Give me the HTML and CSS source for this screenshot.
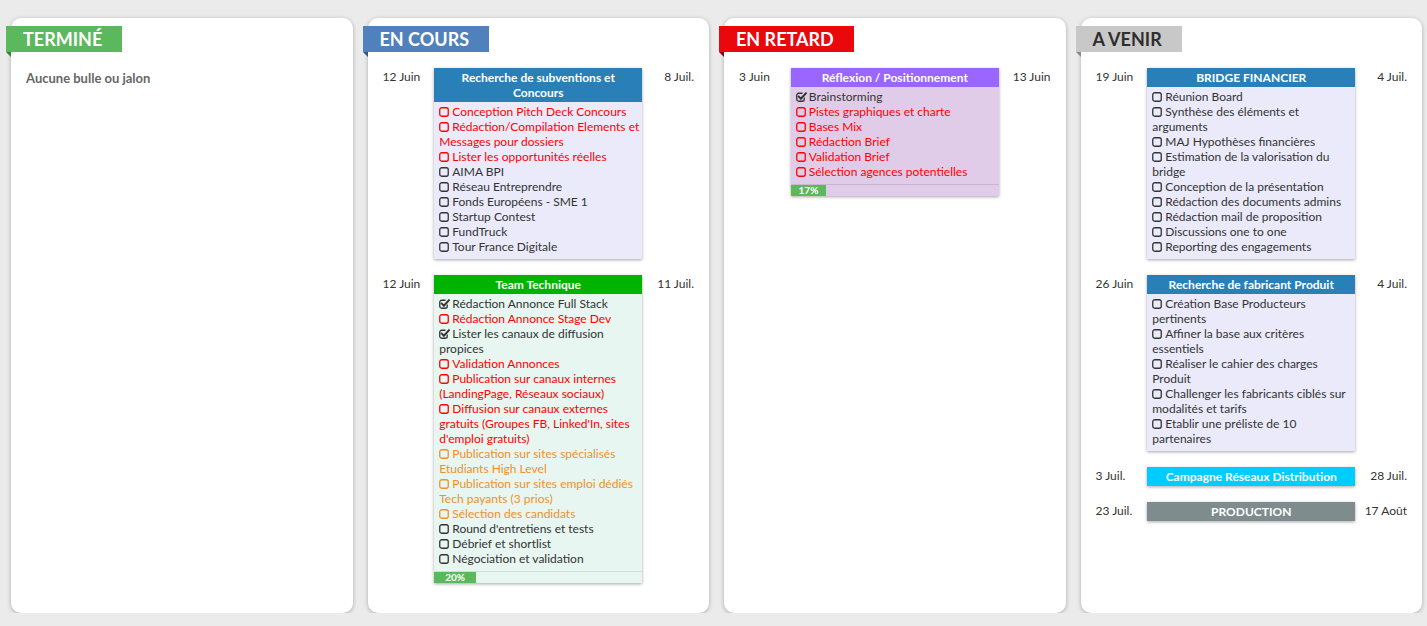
FILE: index.html
```html
<!DOCTYPE html>
<html lang="fr">
<head>
<meta charset="utf-8">
<title>Tableau</title>
<link rel="stylesheet" href="styles.css">
</head>
<body>
<div class="board">

  <section class="col">
    <div class="tab tab-green">TERMINÉ</div>
    <p class="empty">Aucune bulle ou jalon</p>
  </section>

  <section class="col">
    <div class="tab tab-blue">EN COURS</div>
    <div class="rows">
      <div class="row">
        <div class="date">12 Juin</div>
        <div class="card body-lav">
          <div class="card-head head-blue">Recherche de subventions et Concours</div>
          <ul class="items">
            <li class="red"><svg class="cb" viewBox="0 0 10 10"><rect x="0.75" y="0.75" width="8.5" height="8.5" rx="2"/></svg>Conception Pitch Deck Concours</li>
            <li class="red"><svg class="cb" viewBox="0 0 10 10"><rect x="0.75" y="0.75" width="8.5" height="8.5" rx="2"/></svg>Rédaction/Compilation Elements et Messages pour dossiers</li>
            <li class="red"><svg class="cb" viewBox="0 0 10 10"><rect x="0.75" y="0.75" width="8.5" height="8.5" rx="2"/></svg>Lister les opportunités réelles</li>
            <li><svg class="cb" viewBox="0 0 10 10"><rect x="0.75" y="0.75" width="8.5" height="8.5" rx="2"/></svg>AIMA BPI</li>
            <li><svg class="cb" viewBox="0 0 10 10"><rect x="0.75" y="0.75" width="8.5" height="8.5" rx="2"/></svg>Réseau Entreprendre</li>
            <li><svg class="cb" viewBox="0 0 10 10"><rect x="0.75" y="0.75" width="8.5" height="8.5" rx="2"/></svg>Fonds Européens - SME 1</li>
            <li><svg class="cb" viewBox="0 0 10 10"><rect x="0.75" y="0.75" width="8.5" height="8.5" rx="2"/></svg>Startup Contest</li>
            <li><svg class="cb" viewBox="0 0 10 10"><rect x="0.75" y="0.75" width="8.5" height="8.5" rx="2"/></svg>FundTruck</li>
            <li><svg class="cb" viewBox="0 0 10 10"><rect x="0.75" y="0.75" width="8.5" height="8.5" rx="2"/></svg>Tour France Digitale</li>
          </ul>
        </div>
        <div class="date date-end">8 Juil.</div>
      </div>

      <div class="row">
        <div class="date">12 Juin</div>
        <div class="card body-mint">
          <div class="card-head head-green">Team Technique</div>
          <ul class="items">
            <li><svg class="cb cb-on" viewBox="0 0 11 10"><path class="box" d="M8.25 5.5V7.25a2 2 0 0 1-2 2H2.75a2 2 0 0 1-2-2V3.25a2 2 0 0 1 2-2H6.5"/><path class="tick" d="M2.8 4.6L4.9 6.7L9.9 1.3"/></svg>Rédaction Annonce Full Stack</li>
            <li class="red"><svg class="cb" viewBox="0 0 10 10"><rect x="0.75" y="0.75" width="8.5" height="8.5" rx="2"/></svg>Rédaction Annonce Stage Dev</li>
            <li><svg class="cb cb-on" viewBox="0 0 11 10"><path class="box" d="M8.25 5.5V7.25a2 2 0 0 1-2 2H2.75a2 2 0 0 1-2-2V3.25a2 2 0 0 1 2-2H6.5"/><path class="tick" d="M2.8 4.6L4.9 6.7L9.9 1.3"/></svg>Lister les canaux de diffusion propices</li>
            <li class="red"><svg class="cb" viewBox="0 0 10 10"><rect x="0.75" y="0.75" width="8.5" height="8.5" rx="2"/></svg>Validation Annonces</li>
            <li class="red"><svg class="cb" viewBox="0 0 10 10"><rect x="0.75" y="0.75" width="8.5" height="8.5" rx="2"/></svg>Publication sur canaux internes (LandingPage, Réseaux sociaux)</li>
            <li class="red"><svg class="cb" viewBox="0 0 10 10"><rect x="0.75" y="0.75" width="8.5" height="8.5" rx="2"/></svg>Diffusion sur canaux externes gratuits (Groupes FB, Linked'In, sites d'emploi gratuits)</li>
            <li class="orange"><svg class="cb" viewBox="0 0 10 10"><rect x="0.75" y="0.75" width="8.5" height="8.5" rx="2"/></svg>Publication sur sites spécialisés Etudiants High Level</li>
            <li class="orange"><svg class="cb" viewBox="0 0 10 10"><rect x="0.75" y="0.75" width="8.5" height="8.5" rx="2"/></svg>Publication sur sites emploi dédiés Tech payants (3 prios)</li>
            <li class="orange"><svg class="cb" viewBox="0 0 10 10"><rect x="0.75" y="0.75" width="8.5" height="8.5" rx="2"/></svg>Sélection des candidats</li>
            <li><svg class="cb" viewBox="0 0 10 10"><rect x="0.75" y="0.75" width="8.5" height="8.5" rx="2"/></svg>Round d'entretiens et tests</li>
            <li><svg class="cb" viewBox="0 0 10 10"><rect x="0.75" y="0.75" width="8.5" height="8.5" rx="2"/></svg>Débrief et shortlist</li>
            <li><svg class="cb" viewBox="0 0 10 10"><rect x="0.75" y="0.75" width="8.5" height="8.5" rx="2"/></svg>Négociation et validation</li>
          </ul>
          <div class="progress"><div class="bar" style="width:20%">20%</div></div>
        </div>
        <div class="date date-end">11 Juil.</div>
      </div>
    </div>
  </section>

  <section class="col">
    <div class="tab tab-red">EN RETARD</div>
    <div class="rows">
      <div class="row">
        <div class="date">3 Juin</div>
        <div class="card body-lilac">
          <div class="card-head head-purple">Réflexion / Positionnement</div>
          <ul class="items">
            <li><svg class="cb cb-on" viewBox="0 0 11 10"><path class="box" d="M8.25 5.5V7.25a2 2 0 0 1-2 2H2.75a2 2 0 0 1-2-2V3.25a2 2 0 0 1 2-2H6.5"/><path class="tick" d="M2.8 4.6L4.9 6.7L9.9 1.3"/></svg>Brainstorming</li>
            <li class="red"><svg class="cb" viewBox="0 0 10 10"><rect x="0.75" y="0.75" width="8.5" height="8.5" rx="2"/></svg>Pistes graphiques et charte</li>
            <li class="red"><svg class="cb" viewBox="0 0 10 10"><rect x="0.75" y="0.75" width="8.5" height="8.5" rx="2"/></svg>Bases Mix</li>
            <li class="red"><svg class="cb" viewBox="0 0 10 10"><rect x="0.75" y="0.75" width="8.5" height="8.5" rx="2"/></svg>Rédaction Brief</li>
            <li class="red"><svg class="cb" viewBox="0 0 10 10"><rect x="0.75" y="0.75" width="8.5" height="8.5" rx="2"/></svg>Validation Brief</li>
            <li class="red"><svg class="cb" viewBox="0 0 10 10"><rect x="0.75" y="0.75" width="8.5" height="8.5" rx="2"/></svg>Sélection agences potentielles</li>
          </ul>
          <div class="progress"><div class="bar" style="width:17%">17%</div></div>
        </div>
        <div class="date date-end">13 Juin</div>
      </div>
    </div>
  </section>

  <section class="col">
    <div class="tab tab-gray">A VENIR</div>
    <div class="rows">
      <div class="row">
        <div class="date">19 Juin</div>
        <div class="card body-lav">
          <div class="card-head head-blue">BRIDGE FINANCIER</div>
          <ul class="items">
            <li><svg class="cb" viewBox="0 0 10 10"><rect x="0.75" y="0.75" width="8.5" height="8.5" rx="2"/></svg>Réunion Board</li>
            <li><svg class="cb" viewBox="0 0 10 10"><rect x="0.75" y="0.75" width="8.5" height="8.5" rx="2"/></svg>Synthèse des éléments et arguments</li>
            <li><svg class="cb" viewBox="0 0 10 10"><rect x="0.75" y="0.75" width="8.5" height="8.5" rx="2"/></svg>MAJ Hypothèses financières</li>
            <li><svg class="cb" viewBox="0 0 10 10"><rect x="0.75" y="0.75" width="8.5" height="8.5" rx="2"/></svg>Estimation de la valorisation du bridge</li>
            <li><svg class="cb" viewBox="0 0 10 10"><rect x="0.75" y="0.75" width="8.5" height="8.5" rx="2"/></svg>Conception de la présentation</li>
            <li><svg class="cb" viewBox="0 0 10 10"><rect x="0.75" y="0.75" width="8.5" height="8.5" rx="2"/></svg>Rédaction des documents admins</li>
            <li><svg class="cb" viewBox="0 0 10 10"><rect x="0.75" y="0.75" width="8.5" height="8.5" rx="2"/></svg>Rédaction mail de proposition</li>
            <li><svg class="cb" viewBox="0 0 10 10"><rect x="0.75" y="0.75" width="8.5" height="8.5" rx="2"/></svg>Discussions one to one</li>
            <li><svg class="cb" viewBox="0 0 10 10"><rect x="0.75" y="0.75" width="8.5" height="8.5" rx="2"/></svg>Reporting des engagements</li>
          </ul>
        </div>
        <div class="date date-end">4 Juil.</div>
      </div>

      <div class="row">
        <div class="date">26 Juin</div>
        <div class="card body-lav">
          <div class="card-head head-blue">Recherche de fabricant Produit</div>
          <ul class="items">
            <li><svg class="cb" viewBox="0 0 10 10"><rect x="0.75" y="0.75" width="8.5" height="8.5" rx="2"/></svg>Création Base Producteurs pertinents</li>
            <li><svg class="cb" viewBox="0 0 10 10"><rect x="0.75" y="0.75" width="8.5" height="8.5" rx="2"/></svg>Affiner la base aux critères essentiels</li>
            <li><svg class="cb" viewBox="0 0 10 10"><rect x="0.75" y="0.75" width="8.5" height="8.5" rx="2"/></svg>Réaliser le cahier des charges Produit</li>
            <li><svg class="cb" viewBox="0 0 10 10"><rect x="0.75" y="0.75" width="8.5" height="8.5" rx="2"/></svg>Challenger les fabricants ciblés sur modalités et tarifs</li>
            <li><svg class="cb" viewBox="0 0 10 10"><rect x="0.75" y="0.75" width="8.5" height="8.5" rx="2"/></svg>Etablir une préliste de 10 partenaires</li>
          </ul>
        </div>
        <div class="date date-end">4 Juil.</div>
      </div>

      <div class="row">
        <div class="date">3 Juil.</div>
        <div class="card">
          <div class="card-head head-cyan">Campagne Réseaux Distribution</div>
        </div>
        <div class="date date-end">28 Juil.</div>
      </div>

      <div class="row">
        <div class="date">23 Juil.</div>
        <div class="card">
          <div class="card-head head-slate">PRODUCTION</div>
        </div>
        <div class="date date-end">17 Août</div>
      </div>
    </div>
  </section>

</div>
</body>
</html>
```

FILE: styles.css
```css
* { box-sizing: border-box; }

html, body {
  margin: 0;
  padding: 0;
  background: #ebebeb;
  font-family: Lato, "Open Sans", "Liberation Sans", sans-serif;
  color: #333;
}

.board {
  display: flex;
  gap: 15px;
  padding: 18px 5px 0 11px;
}

.col {
  position: relative;
  width: calc((100% - 45px) / 4);
  height: 595px;
  background: #fff;
  border-radius: 10px;
  box-shadow: 0 1px 4px rgba(0, 0, 0, 0.28);
  padding-top: 8px;
  display: flex;
  flex-direction: column;
}

.tab {
  position: relative;
  align-self: flex-start;
  margin-left: -5px;
  height: 26px;
  line-height: 27px;
  padding: 0 20px 0 17px;
  font-size: 18px;
  font-weight: bold;
  color: #fff;
  white-space: nowrap;
}

.tab::after {
  content: "";
  position: absolute;
  left: 0;
  top: 100%;
  border-top: 5px solid rgba(0, 0, 0, 0.45);
  border-left: 5px solid transparent;
}

.tab-green { background: #5cb85c; }
.tab-green::after { border-top-color: #3b7d3b; }
.tab-blue { background: #4f81bd; }
.tab-blue::after { border-top-color: #2f5580; }
.tab-red { background: #ea080d; }
.tab-red::after { border-top-color: #960005; }
.tab-gray { background: #c8c8c8; color: #2e2e2e; }
.tab-gray::after { border-top-color: #8a8a8a; }

.empty {
  margin: 18px 0 0 15px;
  font-size: 13px;
  line-height: 16px;
  font-weight: bold;
  color: #666;
}

.rows {
  margin-top: 16px;
  display: flex;
  flex-direction: column;
  gap: 16px;
}

.row {
  display: grid;
  grid-template-columns: 1fr 208px 1fr;
  align-items: start;
  padding: 0 15px;
}

.date {
  font-size: 12px;
  line-height: 15px;
  color: #333;
  white-space: nowrap;
  padding-top: 1px;
}

.date-end { text-align: right; }

.card {
  box-shadow: 0 1px 3px rgba(0, 0, 0, 0.35);
  font-size: 12px;
  line-height: 15px;
}

.card-head {
  padding: 2px 5px;
  text-align: center;
  font-weight: bold;
  color: #fff;
}

.head-blue { background: #2980b9; }
.head-green { background: #00b300; }
.head-purple { background: #9966ff; }
.head-cyan { background: #00ccff; }
.head-slate { background: #7f8c8d; }

.body-lav { background: #eaeafa; }
.body-mint { background: #e7f6f1; }
.body-lilac { background: #e0cce9; }

.items {
  list-style: none;
  margin: 0;
  padding: 2px 1px 5px 5px;
}

.items li { color: #333; }
.items li.red { color: #ff0000; }
.items li.orange { color: #f0902a; }

.cb {
  display: inline-block;
  width: 10px;
  height: 10px;
  margin-right: 3px;
  vertical-align: -1px;
  fill: none;
  stroke: currentColor;
  stroke-width: 1.3;
}

.cb-on {
  width: 11px;
  margin-right: 2px;
}

.cb-on .tick {
  stroke-width: 2;
  stroke-linecap: square;
}

.progress {
  border-top: 1px solid rgba(0, 0, 0, 0.1);
  height: 12px;
}

.bar {
  height: 11px;
  background: #5cb85c;
  color: #fff;
  font-size: 10px;
  line-height: 11px;
  font-weight: bold;
  text-align: center;
}
```
